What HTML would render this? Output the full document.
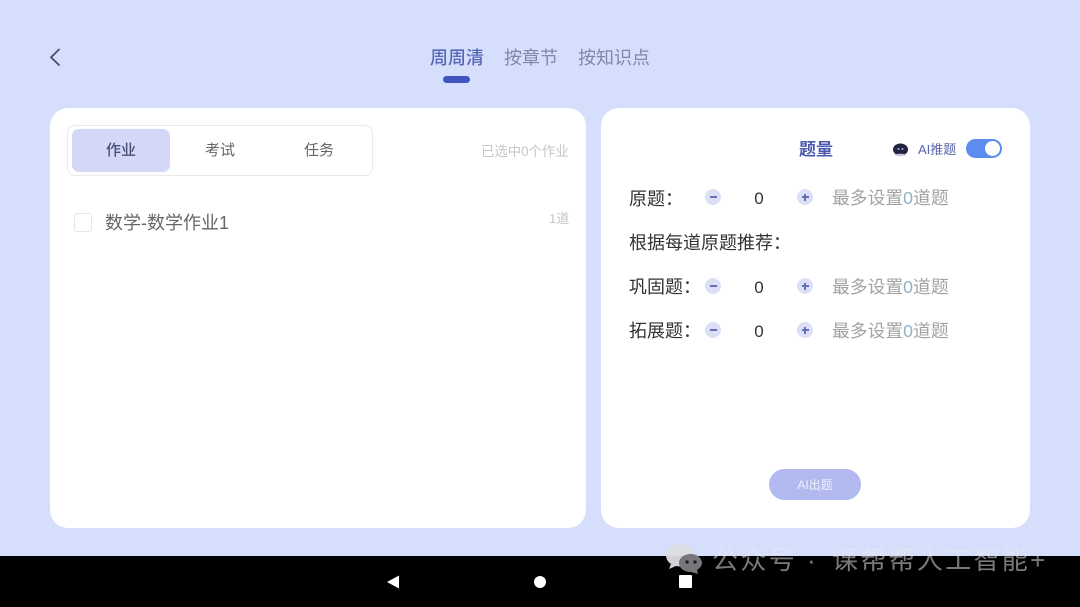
<!DOCTYPE html>
<html lang="zh">
<head>
<meta charset="utf-8">
<style>
html,body{margin:0;padding:0}
body{width:1080px;height:607px;overflow:hidden;position:relative;background:#d5dffc;font-family:"Liberation Sans","Noto Sans CJK SC",sans-serif;}
#p{position:absolute;left:0;top:0;width:1080px;height:607px;filter:blur(.35px)}
.a{position:absolute;white-space:nowrap;line-height:1}
.card{position:absolute;background:#fff;border-radius:18px}
.btn{position:absolute;width:16px;height:16px;border-radius:50%;background:#dcdff6}
.btn:before{content:"";position:absolute;left:4.5px;top:7.2px;width:7px;height:1.5px;background:#6670b8}
.plus:after{content:"";position:absolute;left:7.25px;top:4.5px;width:1.5px;height:7px;background:#6670b8}
.lab{font-size:18px;color:#333}
.num{font-size:17px;color:#333;width:20px;text-align:center}
.max{font-size:17.8px;color:#a3a3a3}
.max b{font-weight:400;color:#8db4c4}
.wm{font-size:26px;color:rgba(232,232,238,.52)}
</style>
</head>
<body>
<div id="p">
<svg class="a" style="left:46px;top:46px" width="20" height="22" viewBox="0 0 20 22"><path d="M13 3.5 L5 11.3 L13 19" fill="none" stroke="#474e6e" stroke-width="1.8" stroke-linecap="round" stroke-linejoin="round"/></svg>

<div class="a" style="left:430px;top:49px;font-size:18px;color:#5866b8;font-weight:500">周周清</div>
<div class="a" style="left:504px;top:49px;font-size:18px;color:#7f88a6">按章节</div>
<div class="a" style="left:578px;top:49px;font-size:18px;color:#7f88a6">按知识点</div>
<div class="a" style="left:443px;top:76px;width:27px;height:7px;border-radius:4px;background:#4054bd"></div>

<div class="card" style="left:50px;top:108px;width:536px;height:420px"></div>
<div class="card" style="left:601px;top:108px;width:429px;height:420px"></div>

<div class="a" style="left:67px;top:125px;width:304px;height:49px;border:1px solid #e8e8ee;border-radius:8px;background:#fff"></div>
<div class="a" style="left:72px;top:129px;width:98px;height:43px;border-radius:7px;background:#d3d8f7"></div>
<div class="a" style="left:106px;top:143px;font-size:15px;color:#4a4f78;font-weight:500">作业</div>
<div class="a" style="left:205px;top:143px;font-size:15px;color:#666">考试</div>
<div class="a" style="left:304px;top:143px;font-size:15px;color:#666">任务</div>
<div class="a" style="left:481px;top:145px;font-size:13.4px;color:#c6c6c6">已选中0个作业</div>

<div class="a" style="left:74px;top:213px;width:16px;height:17px;border:1px solid #e6e6e6;border-radius:3px"></div>
<div class="a" style="left:105px;top:214px;font-size:18px;color:#666">数学-数学作业1</div>
<div class="a" style="left:549px;top:212px;font-size:13px;color:#c6c6c6">1道</div>

<div class="a" style="left:799px;top:141px;font-size:17px;color:#4a58b0;font-weight:700">题量</div>
<svg class="a" style="left:891px;top:141px" width="19" height="16" viewBox="0 0 19 16"><ellipse cx="9.5" cy="8.5" rx="7.5" ry="6" fill="#23253f"/><ellipse cx="9.5" cy="14" rx="6" ry="1.2" fill="#c8cbe0"/><circle cx="7.5" cy="8" r="1" fill="#a9b4ee"/><circle cx="11.5" cy="8" r="1" fill="#a9b4ee"/></svg>
<div class="a" style="left:918px;top:143px;font-size:13px;color:#5a64a8">AI推题</div>
<div class="a" style="left:966px;top:139px;width:36px;height:19px;border-radius:10px;background:#5b8cee"></div>
<div class="a" style="left:985px;top:141px;width:15px;height:15px;border-radius:50%;background:#fff"></div>

<div class="a lab" style="left:629px;top:190px">原题：</div>
<div class="btn" style="left:705px;top:189px"></div>
<div class="a num" style="left:749px;top:190px">0</div>
<div class="btn plus" style="left:797px;top:189px"></div>
<div class="a max" style="left:832px;top:190px">最多设置<b>0</b>道题</div>

<div class="a lab" style="left:629px;top:234px">根据每道原题推荐：</div>

<div class="a lab" style="left:629px;top:278px">巩固题：</div>
<div class="btn" style="left:705px;top:278px"></div>
<div class="a num" style="left:749px;top:279px">0</div>
<div class="btn plus" style="left:797px;top:278px"></div>
<div class="a max" style="left:832px;top:279px">最多设置<b>0</b>道题</div>

<div class="a lab" style="left:629px;top:322px">拓展题：</div>
<div class="btn" style="left:705px;top:322px"></div>
<div class="a num" style="left:749px;top:323px">0</div>
<div class="btn plus" style="left:797px;top:322px"></div>
<div class="a max" style="left:832px;top:323px">最多设置<b>0</b>道题</div>

<div class="a" style="left:769px;top:469px;width:92px;height:31px;border-radius:16px;background:#b2b9ef;color:#eef0fd;font-size:12px;line-height:32px;text-align:center">AI出题</div>

<div class="a" style="left:0;top:556px;width:1080px;height:51px;background:#000"></div>
<svg class="a" style="left:386px;top:574px" width="14" height="16" viewBox="0 0 14 16"><path d="M1 8 L13 1.5 V14.5 Z" fill="#fff"/></svg>
<div class="a" style="left:534px;top:576px;width:12px;height:12px;border-radius:50%;background:#fff"></div>
<div class="a" style="left:679px;top:575px;width:13px;height:13px;border-radius:1px;background:#fff"></div>

<svg class="a" style="left:665px;top:542px" width="38" height="32" viewBox="0 0 38 32"><path d="M15 2 C7 2 1 7 1 13 C1 17 3 20 6 22 L4 27 L11 24 C13 24 14 25 16 24 C14 18 20 11 30 11 C28 6 22 2 15 2Z" fill="#dcdce2" opacity=".95"/><path d="M26 12 C19 12 14 16 14 21 C14 26 19 30 26 30 L33 32 L32 28 C35 26 37 24 37 21 C37 16 32 12 26 12Z" fill="#77777b"/><circle cx="22" cy="20" r="1.7" fill="#222"/><circle cx="30" cy="20" r="1.7" fill="#222"/></svg>
<div class="a wm" style="left:712px;top:547px;letter-spacing:2.4px">公众号</div>
<div class="a wm" style="left:807px;top:547px">·</div>
<div class="a wm" style="left:832px;top:547px;letter-spacing:2.3px">课帮帮人工智能+</div>
</div>
</body>
</html>
